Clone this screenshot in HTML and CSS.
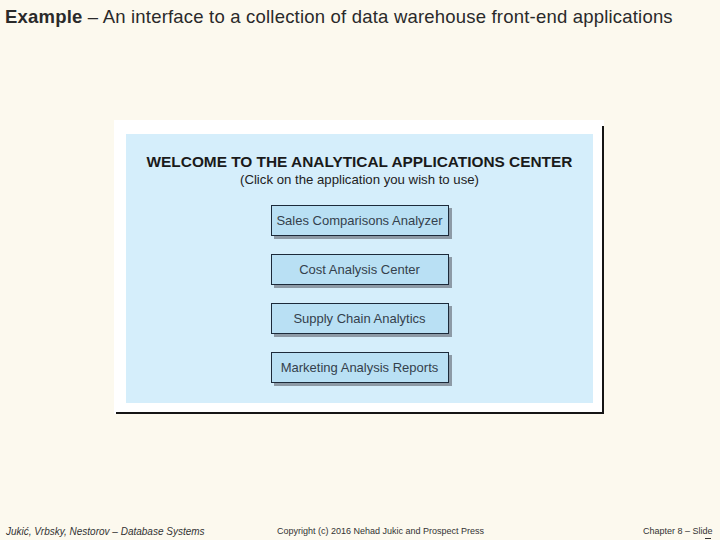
FILE: index.html
```html
<!DOCTYPE html>
<html>
<head>
<meta charset="utf-8">
<link rel="stylesheet" href="styles.css">
</head>
<body>
<div class="slide">
  <h1 class="title"><b>Example</b> – An interface to a collection of data warehouse front-end applications</h1>
  <div class="stage">
    <div class="frame">
      <div class="panel">
        <div class="welcome">WELCOME TO THE ANALYTICAL APPLICATIONS CENTER</div>
        <div class="hint">(Click on the application you wish to use)</div>
        <div class="buttons">
          <div class="app">Sales Comparisons Analyzer</div>
          <div class="app">Cost Analysis Center</div>
          <div class="app">Supply Chain Analytics</div>
          <div class="app">Marketing Analysis Reports</div>
        </div>
      </div>
    </div>
  </div>
  <div class="footer">
    <span class="authors">Jukić, Vrbsky, Nestorov – Database Systems</span>
    <span class="copy">Copyright (c) 2016 Nehad Jukic and Prospect Press</span>
    <span class="chapter">Chapter 8 – Slide<span class="num"></span></span>
  </div>
</div>
</body>
</html>
```
FILE: styles.css
```css
html, body {
  margin: 0;
  padding: 0;
}
body {
  width: 720px;
  height: 540px;
  overflow: hidden;
  background: #fcf9ee;
  font-family: "Liberation Sans", Arial, sans-serif;
  color: #222;
}
.slide {
  width: 720px;
  height: 540px;
  display: flex;
  flex-direction: column;
}
.title {
  margin: 0;
  padding: 6px 0 0 5px;
  height: 30px;
  box-sizing: border-box;
  font-size: 18.5px;
  line-height: 22px;
  font-weight: normal;
  color: #2a2a2a;
  white-space: nowrap;
  letter-spacing: 0.2px;
}
.title b {
  font-weight: bold;
}
.stage {
  padding: 90px 0 0 114px;
  height: 294px;
}
.frame {
  position: relative;
  width: 490px;
  height: 294px;
  box-sizing: border-box;
  background: #fff;
  padding: 14px 11px 11px 12px;
}
.frame::after {
  content: "";
  position: absolute;
  top: 6px;
  left: 2px;
  right: 0;
  bottom: 0;
  border-right: 2px solid #151515;
  border-bottom: 2px solid #151515;
}
.panel {
  height: 100%;
  background: #d5eefb;
  display: flex;
  flex-direction: column;
  align-items: center;
  padding-top: 19px;
  box-sizing: border-box;
}
.welcome {
  font-size: 15.4px;
  font-weight: bold;
  color: #1a1a1a;
  line-height: 18px;
  white-space: nowrap;
}
.hint {
  font-size: 13.2px;
  color: #222;
  line-height: 16px;
  margin-top: 1px;
}
.buttons {
  margin-top: 17px;
  display: flex;
  flex-direction: column;
  gap: 18px;
}
.app {
  width: 178px;
  height: 31px;
  box-sizing: border-box;
  border: 1px solid #1c2a3a;
  background: #b9e0f4;
  box-shadow: 3px 3px 0 #8d9aa6;
  display: flex;
  align-items: center;
  justify-content: center;
  font-size: 13px;
  color: #34404c;
}
.footer {
  margin-top: auto;
  height: 14px;
  display: flex;
  align-items: flex-start;
  font-size: 9px;
  color: #333;
  position: relative;
}
.authors {
  font-style: italic;
  font-size: 10px;
  margin-left: 6px;
  width: 271px;
}
.copy {
  width: 366px;
}
.chapter {
  position: relative;
}
.num {
  position: absolute;
  right: 2px;
  top: 12px;
  width: 6px;
  height: 1px;
  background: #333;
}
```
